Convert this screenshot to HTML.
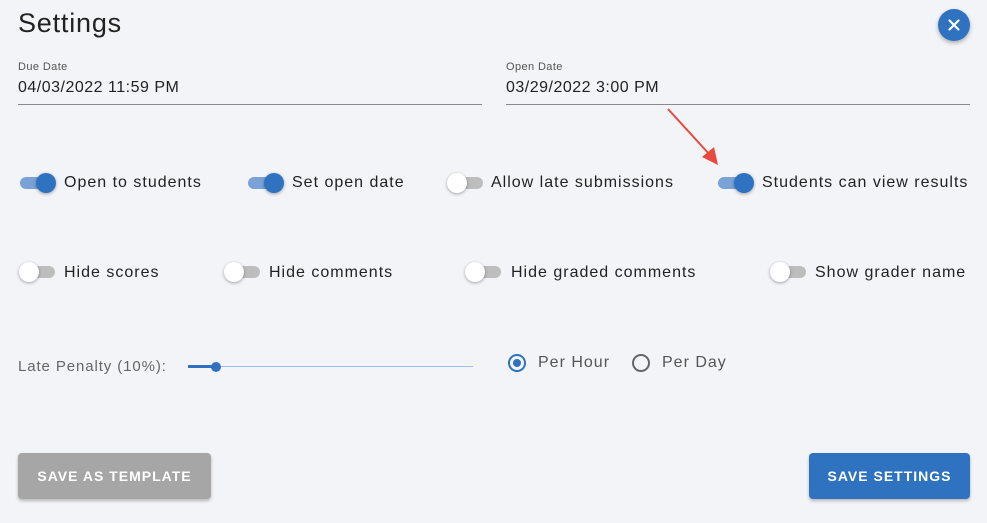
<!DOCTYPE html>
<html><head><style>
body{margin:0;width:987px;height:523px;background:#f3f4f8;font-family:"Liberation Sans",sans-serif;color:#222;position:relative;overflow:hidden}
.a{position:absolute;white-space:nowrap}
.lbl{font-size:16px;color:#222;letter-spacing:1px}
.tr{position:absolute;width:34px;height:12px;border-radius:6px}
.on .tr{background:#7ba2d6}
.off .tr{background:#bdbdbd}
.th{position:absolute;width:20px;height:20px;border-radius:50%;top:-4px;box-shadow:0 1px 3px rgba(0,0,0,.35)}
.on .th{background:#2f72bf;left:16px}
.off .th{background:#fff;left:-2px}
.tg{position:absolute;width:34px;height:12px}
.line{position:absolute;height:1px;background:#8a8a8a}
.btn{position:absolute;height:46px;border-radius:4px;color:#fff;font-size:14px;font-weight:bold;letter-spacing:1px;text-align:center;line-height:46px;box-shadow:0 2px 3px rgba(0,0,0,.25)}
.rad{position:absolute;width:14px;height:14px;border-radius:50%;border:2px solid #666}
</style></head><body>
<div class="a" style="left:18px;top:8px;font-size:27px;letter-spacing:0.8px;color:#222">Settings</div>
<div class="a" style="left:938px;top:9px;width:32px;height:32px;border-radius:50%;background:#2f72bf;box-shadow:0 2px 4px rgba(0,0,0,.3)"><svg width="32" height="32"><path d="M11.5 11.5L20.5 20.5M20.5 11.5L11.5 20.5" stroke="#fff" stroke-width="2.2" stroke-linecap="round"/></svg></div>

<div class="a" style="left:18px;top:61px;font-size:11px;color:#555;letter-spacing:0.4px">Due Date</div>
<div class="a" style="left:18px;top:79px;font-size:16px;letter-spacing:0.5px">04/03/2022 11:59 PM</div>
<div class="line" style="left:18px;top:104px;width:464px"></div>
<div class="a" style="left:506px;top:61px;font-size:11px;color:#555;letter-spacing:0.4px">Open Date</div>
<div class="a" style="left:506px;top:79px;font-size:16px;letter-spacing:0.5px">03/29/2022 3:00 PM</div>
<div class="line" style="left:506px;top:104px;width:464px"></div>

<svg class="a" style="left:660px;top:105px" width="70" height="70"><line x1="8" y1="4" x2="50" y2="50" stroke="#e84a3f" stroke-width="2"/><polygon points="58,60 42,52 54,42" fill="#e84a3f"/></svg>

<div class="tg on" style="left:20px;top:177px"><div class="tr"></div><div class="th"></div></div>
<div class="a lbl" style="left:64px;top:174px">Open to students</div>
<div class="tg on" style="left:248px;top:177px"><div class="tr"></div><div class="th"></div></div>
<div class="a lbl" style="left:292px;top:174px">Set open date</div>
<div class="tg off" style="left:449px;top:177px"><div class="tr"></div><div class="th"></div></div>
<div class="a lbl" style="left:491px;top:174px">Allow late submissions</div>
<div class="tg on" style="left:718px;top:177px"><div class="tr"></div><div class="th"></div></div>
<div class="a lbl" style="left:762px;top:174px">Students can view results</div>

<div class="tg off" style="left:21px;top:266px"><div class="tr"></div><div class="th"></div></div>
<div class="a lbl" style="left:64px;top:264px">Hide scores</div>
<div class="tg off" style="left:226px;top:266px"><div class="tr"></div><div class="th"></div></div>
<div class="a lbl" style="left:269px;top:264px">Hide comments</div>
<div class="tg off" style="left:467px;top:266px"><div class="tr"></div><div class="th"></div></div>
<div class="a lbl" style="left:511px;top:264px">Hide graded comments</div>
<div class="tg off" style="left:772px;top:266px"><div class="tr"></div><div class="th"></div></div>
<div class="a lbl" style="left:815px;top:264px">Show grader name</div>

<div class="a" style="left:18px;top:358px;font-size:15px;color:#666;letter-spacing:0.9px">Late Penalty (10%):</div>
<div class="a" style="left:188px;top:366px;width:285px;height:1px;background:#9cc0ee"></div>
<div class="a" style="left:188px;top:365px;width:28px;height:3px;background:#2f72bf"></div>
<div class="a" style="left:211px;top:362px;width:10px;height:10px;border-radius:50%;background:#2f72bf"></div>
<div class="rad" style="left:508px;top:354px;border-color:#2f72bf"><div style="position:absolute;left:3px;top:3px;width:8px;height:8px;border-radius:50%;background:#2f72bf"></div></div>
<div class="a lbl" style="left:538px;top:354px;color:#555">Per Hour</div>
<div class="rad" style="left:632px;top:354px"></div>
<div class="a lbl" style="left:662px;top:354px;color:#555">Per Day</div>

<div class="btn" style="left:18px;top:453px;width:193px;background:#a6a6a6">SAVE AS TEMPLATE</div>
<div class="btn" style="left:809px;top:453px;width:161px;background:#2f72bf">SAVE SETTINGS</div>
</body></html>
